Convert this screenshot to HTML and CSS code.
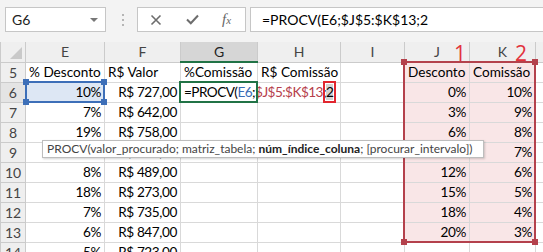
FILE: index.html
```html
<!DOCTYPE html>
<html lang="pt-BR">
<head>
  <meta charset="UTF-8" />
  <title>PROCV - Comissão</title>
  <link rel="stylesheet" href="styles.css">
</head>
<body>

  <div class="toolbar">
    <div class="name-box">G6<span class="caret"></span></div>
    <div class="grip"><i></i><i></i><i></i></div>
    <div class="fx-box">
      <svg class="ico-cancel" width="12" height="12" viewBox="0 0 12 12">
        <path d="M1.5 1.5 L10.5 10.5 M10.5 1.5 L1.5 10.5" stroke="#6d6d6d" stroke-width="1.6" fill="none"/>
      </svg>
      <svg class="ico-enter" width="13" height="11" viewBox="0 0 13 11">
        <path d="M1 5.5 L4.8 9.3 L12 1.5" stroke="#6d6d6d" stroke-width="2" fill="none"/>
      </svg>
      <span class="fx">f<span class="fx-x">x</span></span>
    </div>
    <div class="formula-input">=PROCV(E6;$J$5:$K$13;2</div>
  </div>

  <div class="sheet-wrap">
    <table class="sheet">
      <colgroup>
        <col style="width:25px">
        <col style="width:79px">
        <col style="width:76px">
        <col style="width:77px">
        <col style="width:83px">
        <col style="width:64px">
        <col style="width:65px">
        <col style="width:66px">
        <col style="width:60px">
      </colgroup>
      <thead>
        <tr>
          <th class="corner"><span class="corner-tri"></span></th>
          <th>E</th>
          <th>F</th>
          <th class="col-active">G</th>
          <th>H</th>
          <th>I</th>
          <th class="col-mark">J<span class="mark mark-1">1</span></th>
          <th class="col-mark">K<span class="mark mark-2">2</span></th>
          <th></th>
        </tr>
      </thead>
      <tbody>
        <tr>
          <th>5</th>
          <td class="txt">% Desconto</td>
          <td class="txt">R$ Valor</td>
          <td class="txt">%Comissão</td>
          <td class="txt">R$ Comissão</td>
          <td></td>
          <td class="txt lookup">Desconto</td>
          <td class="txt lookup">Comissão</td>
          <td></td>
        </tr>
        <tr>
          <th class="row-active">6</th>
          <td class="ref">10%</td>
          <td>R$ 727,00</td>
          <td class="editing"><div class="edit-text">=PROCV(<span class="c-blue">E6</span>;<span class="c-red">$J$5:$K$13</span>;<span class="arg">2</span></div></td>
          <td></td>
          <td></td>
          <td class="lookup">0%</td>
          <td class="lookup">10%</td>
          <td></td>
        </tr>
        <tr>
          <th>7</th>
          <td>7%</td>
          <td>R$ 642,00</td>
          <td></td><td></td><td></td>
          <td class="lookup">3%</td>
          <td class="lookup">9%</td>
          <td></td>
        </tr>
        <tr>
          <th>8</th>
          <td>19%</td>
          <td>R$ 758,00</td>
          <td></td><td></td><td></td>
          <td class="lookup">6%</td>
          <td class="lookup">8%</td>
          <td></td>
        </tr>
        <tr>
          <th>9</th>
          <td>11%</td>
          <td>R$ 512,00</td>
          <td></td><td></td><td></td>
          <td class="lookup">9%</td>
          <td class="lookup">7%</td>
          <td></td>
        </tr>
        <tr>
          <th>10</th>
          <td>8%</td>
          <td>R$ 489,00</td>
          <td></td><td></td><td></td>
          <td class="lookup">12%</td>
          <td class="lookup">6%</td>
          <td></td>
        </tr>
        <tr>
          <th>11</th>
          <td>18%</td>
          <td>R$ 273,00</td>
          <td></td><td></td><td></td>
          <td class="lookup">15%</td>
          <td class="lookup">5%</td>
          <td></td>
        </tr>
        <tr>
          <th>12</th>
          <td>7%</td>
          <td>R$ 735,00</td>
          <td></td><td></td><td></td>
          <td class="lookup">18%</td>
          <td class="lookup">4%</td>
          <td></td>
        </tr>
        <tr>
          <th>13</th>
          <td>6%</td>
          <td>R$ 847,00</td>
          <td></td><td></td><td></td>
          <td class="lookup">20%</td>
          <td class="lookup">3%</td>
          <td></td>
        </tr>
        <tr>
          <th>14</th>
          <td>5%</td>
          <td>R$ 723,00</td>
          <td></td><td></td><td></td><td></td><td></td><td></td>
        </tr>
      </tbody>
    </table>

    <!-- selection overlays -->
    <div class="ref-box">
      <i class="h tl"></i><i class="h tr"></i><i class="h bl"></i><i class="h br"></i>
    </div>
    <div class="active-box"></div>
    <div class="range-box">
      <i class="h tl"></i><i class="h tr"></i><i class="h bl"></i><i class="h br"></i>
    </div>

    <div class="tooltip">PROCV(valor_procurado; matriz_tabela; <b>núm_índice_coluna</b>; [procurar_intervalo])</div>
  </div>

</body>
</html>
```

FILE: styles.css
```css
body {
  margin: 0;
  width: 543px;
  height: 252px;
  overflow: hidden;
  background-color: #fff;
  font-family: Lato, "Open Sans", sans-serif;
  color: #000;
}

/* formula bar */
.toolbar {
  height: 42px;
  box-sizing: border-box;
  padding: 7px 0 0 5px;
  background-color: #f3f3f3;
  display: flex;
  align-items: flex-start;
}

.name-box {
  position: relative;
  width: 101px;
  height: 25px;
  box-sizing: border-box;
  padding-left: 6px;
  border: 1px solid #c6c6c6;
  background-color: #fff;
  display: flex;
  align-items: center;
  font-size: 14px;
  color: #222;
}

.caret {
  position: absolute;
  right: 7px;
  top: 10px;
  border-left: 4px solid transparent;
  border-right: 4px solid transparent;
  border-top: 4px solid #777;
}

.grip {
  width: 5px;
  margin: 0 12px 0 14px;
  padding-top: 7px;
  display: flex;
  flex-direction: column;
  align-items: center;
  gap: 3px;
}

.grip i {
  width: 2px;
  height: 2px;
  background-color: #b5b5b5;
}

.fx-box {
  width: 109px;
  height: 25px;
  box-sizing: border-box;
  padding-left: 12px;
  border: 1px solid #c6c6c6;
  background-color: #fff;
  display: flex;
  align-items: center;
}

.ico-enter {
  margin-left: 24px;
}

.fx {
  margin-left: 23px;
  font-family: "Liberation Serif", serif;
  font-style: italic;
  font-size: 15px;
  color: #666;
}

.fx-x {
  font-size: 11px;
}

.formula-input {
  flex: 1;
  margin-left: 4px;
  height: 25px;
  box-sizing: border-box;
  padding-left: 11px;
  border: 1px solid #c6c6c6;
  border-right: none;
  background-color: #fff;
  display: flex;
  align-items: center;
  font-size: 14px;
  white-space: nowrap;
}

/* grid */
.sheet-wrap {
  position: relative;
}

.sheet {
  width: 595px;
  table-layout: fixed;
  border-collapse: collapse;
  font-size: 13.6px;
}

.sheet tr {
  height: 20px;
}

.sheet th,
.sheet td {
  padding: 0 3px;
  border: 1px solid #d9d9d9;
  white-space: nowrap;
  overflow: hidden;
}

.sheet td {
  text-align: right;
  letter-spacing: -0.4px;
}

.sheet td.txt {
  text-align: left;
  letter-spacing: 0;
}

.sheet th {
  background-color: #efefef;
  border-color: #cbcbcb;
  font-weight: normal;
  font-size: 14px;
  color: #444;
  text-align: center;
  padding: 0;
}

.sheet thead th {
  border-top: none;
}

.corner {
  position: relative;
}

.corner-tri {
  position: absolute;
  right: 3px;
  bottom: 3px;
  border-left: 12px solid transparent;
  border-bottom: 12px solid #c9c9c9;
}

.col-active {
  background-color: #d6d6d6 !important;
  border-bottom: 2px solid #217346 !important;
  color: #222 !important;
}

.row-active {
  background-color: #e4e4e4 !important;
  border-right: 2px solid #217346 !important;
}

.col-mark {
  position: relative;
  overflow: visible !important;
}

.mark {
  position: absolute;
  top: 1px;
  font-family: "Open Sans", sans-serif;
  font-size: 21px;
  line-height: 1;
  color: #e2323b;
}

.mark-1 {
  left: 49px;
}

.mark-2 {
  left: 45px;
}

.ref {
  background-color: #dde7f4;
}

.lookup {
  background-color: #f9e6e7;
}

.editing {
  overflow: visible !important;
  text-align: left !important;
}

.edit-text {
  white-space: nowrap;
  letter-spacing: -0.55px;
}

.c-blue {
  color: #3a6cb6;
}

.c-red {
  color: #b6404b;
}

.arg {
  background-color: #d3d3d3;
  outline: 2px solid #e1262f;
  outline-offset: 1px;
}

/* selections */
.ref-box,
.active-box,
.range-box {
  position: absolute;
  box-sizing: border-box;
}

.ref-box {
  left: 25px;
  top: 39px;
  width: 80px;
  height: 22px;
  border: 2px solid #3d6fb8;
}

.active-box {
  left: 179px;
  top: 39px;
  width: 79px;
  height: 22px;
  border: 2px solid #217346;
}

.range-box {
  left: 403px;
  top: 19px;
  width: 133px;
  height: 182px;
  border: 2px solid #b4414c;
}

.h {
  position: absolute;
  width: 6px;
  height: 6px;
}

.ref-box .h {
  background-color: #3d6fb8;
}

.range-box .h {
  background-color: #b4414c;
}

.h.tl { left: -4px; top: -4px; }
.h.tr { right: -4px; top: -4px; }
.h.bl { left: -4px; bottom: -4px; }
.h.br { right: -4px; bottom: -4px; }

.tooltip {
  position: absolute;
  left: 42px;
  top: 98px;
  width: 442px;
  height: 18px;
  box-sizing: border-box;
  padding-left: 4px;
  border: 1px solid #bdbdbd;
  background-color: #fff;
  box-shadow: 1px 1px 2px rgba(0, 0, 0, 0.18);
  font-size: 12px;
  line-height: 16px;
  color: #444;
  white-space: nowrap;
}

.tooltip b {
  color: #222;
}
```
